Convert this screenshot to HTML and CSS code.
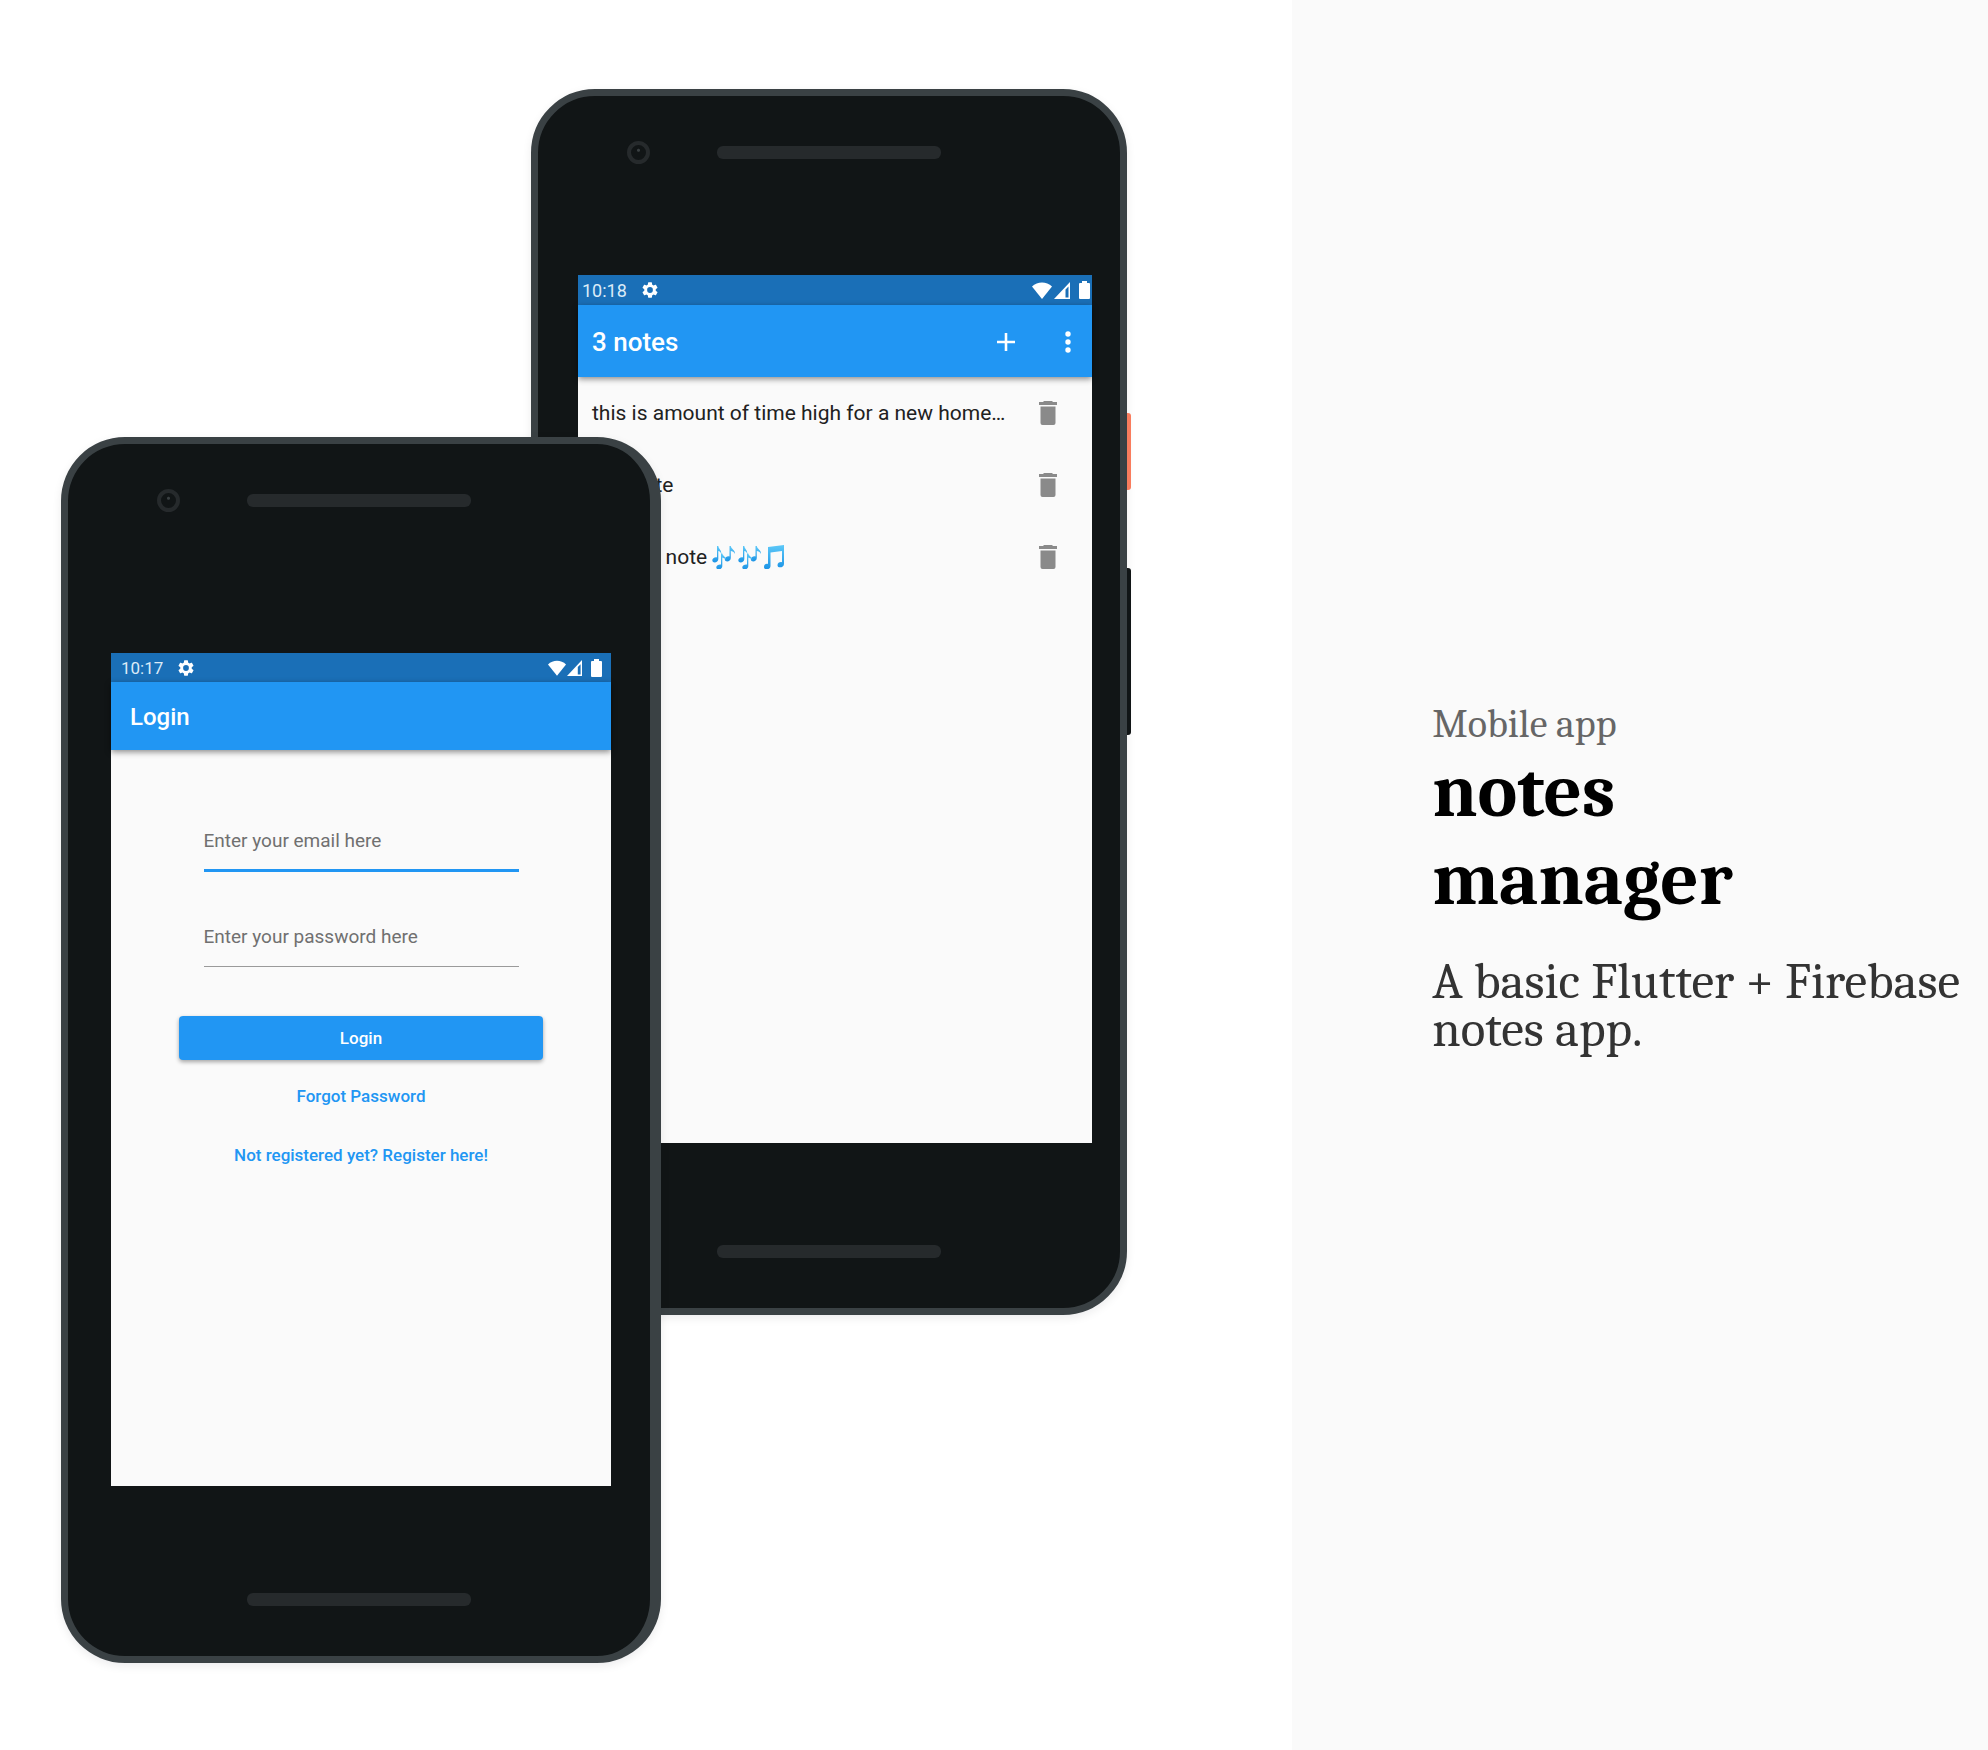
FILE: index.html
```html
<!DOCTYPE html>
<html lang="en">
<head>
<meta charset="utf-8">
<meta name="viewport" content="width=device-width, initial-scale=1">
<title>notes manager</title>
<link rel="stylesheet" href="styles.css">
</head>
<body>
<svg class="sprite" aria-hidden="true">
  <defs>
    <linearGradient id="note-fill" x1="0" y1="0" x2="0" y2="1">
      <stop offset="0" stop-color="#5cc8f8"/>
      <stop offset="1" stop-color="#1c94e6"/>
    </linearGradient>
    <symbol id="gear" viewBox="2 2 20 20"><path fill="currentColor" d="M19.14 12.94c.04-.3.06-.61.06-.94s-.02-.64-.07-.94l2.03-1.58a.49.49 0 0 0 .12-.61l-1.92-3.32a.49.49 0 0 0-.59-.22l-2.39.96a7 7 0 0 0-1.62-.94l-.36-2.54a.48.48 0 0 0-.48-.41h-3.84a.47.47 0 0 0-.47.41l-.36 2.54c-.59.24-1.13.57-1.62.94l-2.39-.96a.48.48 0 0 0-.59.22L2.74 8.87a.47.47 0 0 0 .12.61l2.03 1.58a6 6 0 0 0 0 1.88l-2.03 1.58a.49.49 0 0 0-.12.61l1.92 3.32c.12.22.37.29.59.22l2.39-.96c.5.38 1.03.7 1.62.94l.36 2.54c.05.24.24.41.48.41h3.84c.24 0 .44-.17.47-.41l.36-2.54a7 7 0 0 0 1.62-.94l2.39.96c.22.08.47 0 .59-.22l1.92-3.32a.47.47 0 0 0-.12-.61zM12 15.6a3.6 3.6 0 1 1 0-7.2 3.6 3.6 0 0 1 0 7.2z"/></symbol>
    <symbol id="wifi" viewBox="0 0 20 17"><path fill="currentColor" d="M0 4.5C5.500-1 14.500-1 20 4.500L10 17z"/></symbol>
    <symbol id="signal" viewBox="0 0 16 17"><path fill="currentColor" fill-rule="evenodd" d="M16 0v17H0zM14.500 4.500L11.500 7.500V15.500H14.500z"/></symbol>
    <symbol id="battery" viewBox="0 0 11 18"><path fill="currentColor" d="M3 0h5v2h2a1 1 0 0 1 1 1v14a1 1 0 0 1-1 1H1a1 1 0 0 1-1-1V3a1 1 0 0 1 1-1h2z"/></symbol>
    <symbol id="plus" viewBox="5 5 14 14"><path fill="currentColor" d="M19 13h-6v6h-2v-6H5v-2h6V5h2v6h6z"/></symbol>
    <symbol id="dots" viewBox="0 0 6 22"><g fill="currentColor"><circle cx="3" cy="3" r="2.700"/><circle cx="3" cy="11" r="2.700"/><circle cx="3" cy="19" r="2.700"/></g></symbol>
    <symbol id="trash" viewBox="0 0 18 24"><path fill="currentColor" d="M1.500 5.500h15V22a2 2 0 0 1-2 2h-11a2 2 0 0 1-2-2zM18 1h-4l-1-1H5L4 1H0v3h18z"/></symbol>
    <symbol id="notes3" viewBox="0 0 24 24"><g fill="url(#note-fill)"><path d="M5 1h1.300c.2 3 3.500 4 3 8-.5-2-1.800-2.700-3-3v8c0 4-5.800 4.500-6 1.500-.2-2 2.500-3.600 4.700-3z"/><path d="M17.500 1h1.300c.2 3 4.700 4 4.200 8-.5-2-3-2.700-4.200-3v7c0 4-5.800 4.500-6 1.500-.2-2 2.500-3.600 4.700-3z"/><path d="M9 8.500h1.300c.2 2.600 4.500 3.500 4 7-.5-2-2.800-2.500-4-3V21c0 4-5.800 4.500-6 1.500-.2-2 2.500-3.400 4.700-3z"/></g></symbol>
    <symbol id="beamed" viewBox="0 0 20 24"><path fill="url(#note-fill)" d="M4 2l16-2v19c0 4-6.500 4.500-6.500 1.200 0-2.400 2.500-3.600 4.500-3V6L6.500 7.500V21c0 4-6.500 4.500-6.500 1 0-2.400 2-3.600 4-3z"/></symbol>
  </defs>
</svg>

<main class="showcase">
  <section class="stage" aria-label="App screens">
    <article class="phone phone-back">
      <div class="phone-top"><span class="camera"></span><span class="speaker"></span></div>
      <div class="screen">
        <div class="status">
          <span>10:18</span><svg class="gear"><use href="#gear"/></svg>
          <svg class="wifi"><use href="#wifi"/></svg><svg class="signal"><use href="#signal"/></svg><svg class="battery"><use href="#battery"/></svg>
        </div>
        <header class="appbar">
          <h2>3 notes</h2>
          <button class="icon-button" aria-label="Add note"><svg class="plus"><use href="#plus"/></svg></button>
          <button class="icon-button" aria-label="More"><svg class="dots"><use href="#dots"/></svg></button>
        </header>
        <ul class="notes">
          <li><span class="note-text">this is amount of time high for a new home…</span><button class="icon-button" aria-label="Delete"><svg class="trash"><use href="#trash"/></svg></button></li>
          <li><span class="note-text">one note</span><button class="icon-button" aria-label="Delete"><svg class="trash"><use href="#trash"/></svg></button></li>
          <li><span class="note-text">second note <svg class="music"><use href="#notes3"/></svg><svg class="music"><use href="#notes3"/></svg><svg class="music-beamed"><use href="#beamed"/></svg></span><button class="icon-button" aria-label="Delete"><svg class="trash"><use href="#trash"/></svg></button></li>
        </ul>
      </div>
      <span class="speaker speaker-bottom"></span>
      <span class="side-key power"></span>
      <span class="side-key volume"></span>
    </article>

    <article class="phone phone-front">
      <div class="phone-top"><span class="camera"></span><span class="speaker"></span></div>
      <div class="screen">
        <div class="status">
          <span>10:17</span><svg class="gear"><use href="#gear"/></svg>
          <svg class="wifi"><use href="#wifi"/></svg><svg class="signal"><use href="#signal"/></svg><svg class="battery"><use href="#battery"/></svg>
        </div>
        <header class="appbar"><h2>Login</h2></header>
        <form class="login">
          <input class="active" type="email" aria-label="Email" placeholder="Enter your email here">
          <input type="password" aria-label="Password" placeholder="Enter your password here">
          <button class="submit" type="button">Login</button>
          <a href="#forgot">Forgot Password</a>
          <a href="#register">Not registered yet? Register here!</a>
        </form>
      </div>
      <span class="speaker speaker-bottom"></span>
    </article>
  </section>

  <section class="about">
    <p class="kind">Mobile app</p>
    <h1>notes<br>manager</h1>
    <p class="summary">A basic Flutter + Firebase notes app.</p>
  </section>
</main>
</body>
</html>
```

FILE: styles.css
```css
* { box-sizing: border-box; }
body { margin: 0; background: #fff; font-family: Roboto, sans-serif; }
h1, h2, p, ul { margin: 0; padding: 0; }
button { border: 0; padding: 0; background: none; color: inherit; font: inherit; }
svg { display: block; flex: none; }
.sprite { position: absolute; width: 0; height: 0; }

.showcase { display: flex; min-height: 100vh; }
.stage { width: 65%; display: grid; justify-items: start; align-items: start; padding: 89px 0 88px 61px; }
.about {
  width: 35%; padding: 2px 0 0 140px;
  display: flex; flex-direction: column; justify-content: center;
  background: #fafafa; font-family: Cambria, Caladea, "Liberation Serif", serif;
}
.kind { font-size: 40px; line-height: 48px; color: #666; }
h1 { font-size: 75px; line-height: 88px; color: #000; }
.summary { margin-top: 34px; font-size: 51px; line-height: 48px; color: #333; }

/* Devices */
.phone {
  grid-area: 1 / 1; position: relative; height: 1226px;
  display: flex; flex-direction: column;
  border: 7px solid #3a4144; border-radius: 64px; background: #111516;
  box-shadow: 0 3px 10px rgba(0, 0, 20, 0.08);
}
.phone-back { width: 596px; margin-left: 470px; padding: 0 28px 0 40px; }
.phone-front { width: 600px; margin-top: 348px; border-right-width: 11px; padding: 0 39px 0 43px; }
.phone-top { display: flex; align-items: center; gap: 67px; height: 113px; padding-left: 49px; }
.phone-back .phone-top { margin-bottom: 66px; }
.phone-front .phone-top { margin-bottom: 96px; padding-left: 46px; }
.camera { width: 23px; height: 23px; border: 4px solid #262a2c; border-radius: 50%; background: radial-gradient(circle at 50% 35%, #3a4042 1px, #111516 2px); }
.speaker { width: 224px; height: 13px; border-radius: 6px; background: #262a2c; }
.phone-back .speaker-bottom { margin: 102px 0 0 139px; }
.phone-front .speaker-bottom { margin: 107px 0 0 136px; }
.side-key { position: absolute; right: -11px; width: 4px; border-radius: 0 3px 3px 0; }
.power { top: 317px; height: 77px; background: #f97c5d; }
.volume { top: 472px; height: 167px; background: #111516; }

/* App screens */
.screen { background: #fafafa; color: #212121; }
.phone-back .screen { height: 868px; }
.phone-front .screen { height: 833px; }
.status { display: flex; align-items: center; height: 30px; padding: 0 2px 0 4px; background: #1a6fb7; color: #fff; font-size: 18px; }
.status span { color: #dcebf7; }
.gear { width: 16px; height: 18px; margin-left: 15px; }
.wifi { width: 20px; height: 17px; margin-left: auto; }
.signal { width: 16px; height: 17px; margin-left: 2px; }
.battery { width: 11px; height: 18px; margin-left: 9px; }
.appbar { display: flex; align-items: center; height: 72px; padding: 2px 0 0 14px; background: #2196f3; color: #fff; box-shadow: 0 2px 6px rgba(0, 0, 0, 0.45); }
h2 { flex: 1; font-size: 26px; line-height: 32px; font-weight: 500; }
.icon-button { display: grid; place-items: center; width: 62px; height: 62px; }
.appbar .icon-button + .icon-button { width: 48px; }
.appbar .icon-button:first-of-type { width: 76px; }
.plus { width: 18px; height: 18px; }
.dots { width: 6px; height: 22px; }
.phone-front .status { height: 29px; padding: 0 9px 0 10px; font-size: 17px; }
.phone-front .wifi { width: 18px; height: 16px; }
.phone-front .signal { width: 15px; height: 16px; margin-left: 1px; }
.phone-front .appbar { height: 68px; padding-left: 19px; }
.phone-front h2 { font-size: 24px; }

.notes { list-style: none; }
.notes li { display: flex; align-items: center; height: 72px; padding: 0 13px 0 14px; }
.note-text { flex: 1; display: flex; align-items: center; font-size: 21px; white-space: pre; }
.trash { width: 18px; height: 24px; color: #8a8a8a; }
.music { width: 24px; height: 24px; margin-right: 2px; }
.music-beamed { width: 20px; height: 24px; }

.login { display: flex; flex-direction: column; align-items: center; padding-top: 63px; }
input {
  width: 315px; height: 59px; margin-bottom: 36px; padding: 0 0 2px;
  border: 0; border-bottom: 1px solid #9a9a9a; outline: 0; background: none;
  font: 19px/24px Roboto, sans-serif;
}
input.active { border-bottom: 3px solid #2196f3; }
input::placeholder { color: #707070; opacity: 1; }
.submit { width: 364px; height: 44px; margin: 13px 0 24px; border-radius: 4px; background: #2196f3; color: #fff; font-size: 17px; font-weight: 500; box-shadow: 0 2px 4px rgba(0, 0, 0, 0.35); }
.login a { margin-bottom: 35px; color: #2196f3; font-size: 17px; line-height: 24px; font-weight: 500; text-decoration: none; }
```
